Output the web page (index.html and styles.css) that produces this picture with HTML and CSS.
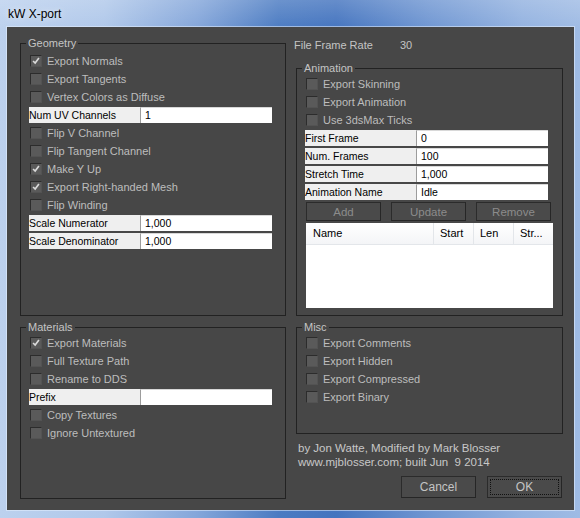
FILE: index.html
```html
<html>
  <head>
    <link rel="stylesheet" href="styles.css">
  </head>
  <body>
    <div class="window">
      <div class="titlebar">
        <span class="titlebar__text">kW X-port</span>
      </div>
      <div class="client">
        <div class="column column--left">
          <fieldset class="group group--geometry">
            <legend class="group__title">Geometry</legend>
            <label class="check is-checked"><span class="check__box"><svg viewBox="0 0 12 12"><polyline points="2.5,6 5,8.5 9.5,2.5"/></svg></span>Export Normals</label>
            <label class="check"><span class="check__box"></span>Export Tangents</label>
            <label class="check"><span class="check__box"></span>Vertex Colors as Diffuse</label>
            <div class="field"><span class="field__label">Num UV Channels</span><span class="field__input">1</span></div>
            <label class="check"><span class="check__box"></span>Flip V Channel</label>
            <label class="check"><span class="check__box"></span>Flip Tangent Channel</label>
            <label class="check is-checked"><span class="check__box"><svg viewBox="0 0 12 12"><polyline points="2.5,6 5,8.5 9.5,2.5"/></svg></span>Make Y Up</label>
            <label class="check is-checked"><span class="check__box"><svg viewBox="0 0 12 12"><polyline points="2.5,6 5,8.5 9.5,2.5"/></svg></span>Export Right-handed Mesh</label>
            <label class="check"><span class="check__box"></span>Flip Winding</label>
            <div class="field"><span class="field__label">Scale Numerator</span><span class="field__input">1,000</span></div>
            <div class="field"><span class="field__label">Scale Denominator</span><span class="field__input">1,000</span></div>
          </fieldset>

          <fieldset class="group group--materials">
            <legend class="group__title">Materials</legend>
            <label class="check is-checked"><span class="check__box"><svg viewBox="0 0 12 12"><polyline points="2.5,6 5,8.5 9.5,2.5"/></svg></span>Export Materials</label>
            <label class="check"><span class="check__box"></span>Full Texture Path</label>
            <label class="check"><span class="check__box"></span>Rename to DDS</label>
            <div class="field"><span class="field__label">Prefix</span><span class="field__input"></span></div>
            <label class="check"><span class="check__box"></span>Copy Textures</label>
            <label class="check"><span class="check__box"></span>Ignore Untextured</label>
          </fieldset>
        </div>

        <div class="column column--right">
          <div class="rate">
            <span class="rate__label">File Frame Rate</span>
            <span class="rate__value">30</span>
          </div>

          <fieldset class="group group--animation">
            <legend class="group__title">Animation</legend>
            <label class="check"><span class="check__box"></span>Export Skinning</label>
            <label class="check"><span class="check__box"></span>Export Animation</label>
            <label class="check"><span class="check__box"></span>Use 3dsMax Ticks</label>
            <div class="field"><span class="field__label">First Frame</span><span class="field__input">0</span></div>
            <div class="field"><span class="field__label">Num. Frames</span><span class="field__input">100</span></div>
            <div class="field"><span class="field__label">Stretch Time</span><span class="field__input">1,000</span></div>
            <div class="field"><span class="field__label">Animation Name</span><span class="field__input">Idle</span></div>
            <div class="anim-buttons">
              <button class="btn btn--disabled">Add</button>
              <button class="btn btn--disabled">Update</button>
              <button class="btn btn--disabled">Remove</button>
            </div>
            <div class="list">
              <div class="list__head">
                <span class="list__col list__col--name">Name</span>
                <span class="list__col">Start</span>
                <span class="list__col">Len</span>
                <span class="list__col">Str...</span>
              </div>
            </div>
          </fieldset>

          <fieldset class="group group--misc">
            <legend class="group__title">Misc</legend>
            <label class="check"><span class="check__box"></span>Export Comments</label>
            <label class="check"><span class="check__box"></span>Export Hidden</label>
            <label class="check"><span class="check__box"></span>Export Compressed</label>
            <label class="check"><span class="check__box"></span>Export Binary</label>
          </fieldset>

          <p class="credits">by Jon Watte, Modified by Mark Blosser<br>www.mjblosser.com; built Jun&nbsp;&nbsp;9 2014</p>

          <div class="actions">
            <button class="btn btn--action">Cancel</button>
            <button class="btn btn--action btn--default">OK</button>
          </div>
        </div>
      </div>
    </div>
  </body>
</html>
```

FILE: styles.css
```css
:root {
  --client-bg: #474747;
  --group-border: #222;
  --text: #bdbdbd;
}

* {
  padding: 0;
  margin: 0;
  box-sizing: border-box;
}

html, body {
  width: 580px;
  height: 518px;
  overflow: hidden;
}

body {
  font-family: "Liberation Sans", Arial, sans-serif;
  font-size: 11px;
  background: #fff;
}

.window {
  width: 580px;
  height: 518px;
  display: flex;
  flex-direction: column;
  padding: 0 6px 8px 7px;
  background:
    linear-gradient(to bottom, rgba(255,255,255,.18), rgba(255,255,255,0) 30px),
    linear-gradient(90deg, #bcd1ee 0%, #b0c8ea 18%, #84a6da 34%, #4b7bc2 48%, #4474bf 58%, #6f96d2 74%, #93b2e0 90%, #9fbbe4 100%);
}

.titlebar {
  height: 27px;
  display: flex;
  align-items: center;
  padding-left: 1px;
}

.titlebar__text {
  font-size: 12px;
  color: #000;
  text-shadow: 0 0 6px rgba(255,255,255,.8);
}

.client {
  flex: 1;
  display: flex;
  gap: 10px;
  padding: 9px 0 0 13px;
  background: var(--client-bg);
  box-shadow: 0 0 0 1px rgba(230,240,255,.55);
}

.column {
  display: flex;
  flex-direction: column;
}

.column--left {
  width: 266px;
}

.column--right {
  width: 267px;
}

/* group boxes */
.group {
  min-width: 0;
  border: 1px solid var(--group-border);
  padding: 0 8px;
}

.group__title {
  margin-left: -3px;
  padding: 0 2px;
  line-height: 14px;
  color: #c4c4c4;
}

.group--geometry {
  height: 280px;
  padding-top: 2px;
}

.group--materials {
  height: 179px;
  margin-top: 4px;
}

.group--animation {
  height: 255px;
}

.group--misc {
  height: 114px;
  margin-top: 4px;
}

/* checkboxes */
.check {
  height: 18px;
  display: flex;
  align-items: center;
  color: var(--text);
  white-space: nowrap;
}

.check__box {
  width: 12px;
  height: 12px;
  margin: 0 5px 0 1px;
  background: #5a5a5a;
  border: 1px solid;
  border-color: #2c2c2c #535353 #535353 #2c2c2c;
  display: flex;
}

.check__box svg {
  width: 10px;
  height: 10px;
  fill: none;
  stroke: #dadada;
  stroke-width: 2;
}

/* label + edit rows */
.field {
  height: 18px;
  padding: 1px 0;
  width: 243px;
  display: flex;
}

.field__label {
  width: 111px;
  background: #efefef;
  color: #000;
  line-height: 16px;
  font-size: 10.5px;
  white-space: nowrap;
}

.field__input {
  flex: 1;
  background: #fff;
  border-left: 1px solid #9c9c9c;
  border-top: 1px solid #d8d8d8;
  color: #000;
  padding-left: 4px;
  line-height: 15px;
  font-size: 10.5px;
}

/* right column */
.rate {
  display: flex;
  line-height: 14px;
  margin: 2px 0 9px -2px;
  color: #c4c4c4;
}

.rate__label {
  width: 106px;
}

.anim-buttons {
  display: flex;
  gap: 10px;
  margin: 1px 0 0 1px;
}

.btn {
  font-family: inherit;
  font-size: 11px;
  background: #4a4a4a;
  border: 1px solid #2b2b2b;
  border-right-color: #262626;
  border-bottom-color: #262626;
}

.btn--disabled {
  width: 75px;
  height: 19px;
  color: #8c8c8c;
  font-size: 11.5px;
}

.list {
  margin: 2px 0 0 1px;
  width: 247px;
  height: 85px;
  background: #fff;
}

.list__head {
  height: 22px;
  display: flex;
  background: linear-gradient(#fff, #f4f5f7);
  border-bottom: 1px solid #e3e6ea;
}

.list__col {
  width: 40px;
  line-height: 21px;
  padding-left: 6px;
  color: #000;
  border-left: 1px solid #e3e6ea;
}

.list__col--name {
  width: 127px;
  padding-left: 7px;
  border-left: 0;
}

.credits {
  margin: 7px 0 0 2px;
  line-height: 14px;
  color: #c8c8c8;
  font-size: 11.5px;
}

.actions {
  display: flex;
  justify-content: flex-end;
  gap: 11px;
  margin-top: 7px;
  padding-right: 1px;
}

.btn--action {
  width: 75px;
  height: 22px;
  color: #c4c4c4;
  font-size: 12px;
}

.btn--default {
  outline: 1px dotted #111;
  outline-offset: -4px;
}
```
